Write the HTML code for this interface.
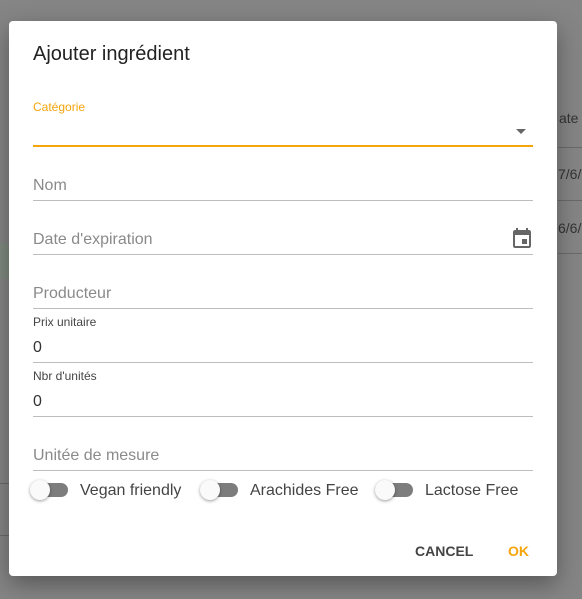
<!DOCTYPE html>
<html><head><style>
body{margin:0;width:582px;height:599px;background:#858585;position:relative;overflow:hidden;font-family:"Liberation Sans",sans-serif}
.a{position:absolute}
.dlg{left:9px;top:21px;width:548px;height:555px;background:#fff;border-radius:4px;box-shadow:0 8px 24px rgba(0,0,0,.35)}
.ln{left:33px;width:500px;height:1px;background:#bdbdbd}
.ph{left:33px;font-size:16px;color:#8a8a8a}
.sm{left:33px;font-size:12px;color:#444}
.val{left:33px;font-size:16px;color:#333}
.tr{width:34px;height:14px;border-radius:7px;background:#7d7d7d}
.th{width:20px;height:20px;border-radius:50%;background:#fafafa;box-shadow:0 1px 3px rgba(0,0,0,.4)}
.lb{font-size:16px;color:#444}
</style></head><body>
<div class="a" style="left:559px;top:110px;font-size:14px;color:#333">ate</div>
<div class="a" style="left:558px;top:147px;width:24px;height:1px;background:#6a6a6a"></div>
<div class="a" style="left:558px;top:166px;font-size:14px;color:#333">7/6/</div>
<div class="a" style="left:558px;top:200px;width:24px;height:1px;background:#6a6a6a"></div>
<div class="a" style="left:558px;top:220px;font-size:14px;color:#333">6/6/</div>
<div class="a" style="left:558px;top:253px;width:24px;height:1px;background:#6a6a6a"></div>
<div class="a" style="left:0;top:243px;width:9px;height:36px;background:#7f8a7f"></div>
<div class="a" style="left:0;top:483px;width:9px;height:1px;background:#6a6a6a"></div>
<div class="a" style="left:0;top:535px;width:9px;height:1px;background:#6a6a6a"></div>
<div class="a dlg"></div>
<div class="a" style="left:33px;top:43px;font-size:20px;color:#222">Ajouter ingrédient</div>
<div class="a" style="left:33px;top:100px;font-size:12px;color:#f5a50a">Catégorie</div>
<div class="a" style="left:516px;top:129px;width:0;height:0;border-left:5px solid transparent;border-right:5px solid transparent;border-top:5px solid #666"></div>
<div class="a" style="left:33px;top:145px;width:500px;height:2px;background:#f5a50a"></div>
<div class="a ph" style="top:177px">Nom</div>
<div class="a ln" style="top:200px"></div>
<div class="a ph" style="top:231px">Date d'expiration</div>
<svg class="a" style="left:510px;top:227px" width="24" height="24" viewBox="0 0 24 24"><path fill="#666" d="M17 12h-5v5h5v-5zM16 1v2H8V1H6v2H5c-1.11 0-1.990.9-1.99 2L3 19c0 1.1.89 2 2 2h14c1.1 0 2-.9 2-2V5c0-1.1-.9-2-2-2h-1V1h-2zm3 18H5V8h14v11z"/></svg>
<div class="a ln" style="top:254px"></div>
<div class="a ph" style="top:285px">Producteur</div>
<div class="a ln" style="top:308px"></div>
<div class="a sm" style="top:315px">Prix unitaire</div>
<div class="a val" style="top:339px">0</div>
<div class="a ln" style="top:362px"></div>
<div class="a sm" style="top:369px">Nbr d'unités</div>
<div class="a val" style="top:393px">0</div>
<div class="a ln" style="top:416px"></div>
<div class="a ph" style="top:447px">Unitée de mesure</div>
<div class="a ln" style="top:470px"></div>
<div class="a tr" style="left:34px;top:483px"></div><div class="a th" style="left:30px;top:480px"></div>
<div class="a lb" style="left:80px;top:482px">Vegan friendly</div>
<div class="a tr" style="left:204px;top:483px"></div><div class="a th" style="left:200px;top:480px"></div>
<div class="a lb" style="left:250px;top:482px">Arachides Free</div>
<div class="a tr" style="left:379px;top:483px"></div><div class="a th" style="left:375px;top:480px"></div>
<div class="a lb" style="left:425px;top:482px">Lactose Free</div>
<div class="a" style="left:415px;top:543px;font-size:14px;font-weight:bold;color:#444">CANCEL</div>
<div class="a" style="left:508px;top:543px;font-size:14px;font-weight:bold;color:#f5a50a">OK</div>
</body></html>
